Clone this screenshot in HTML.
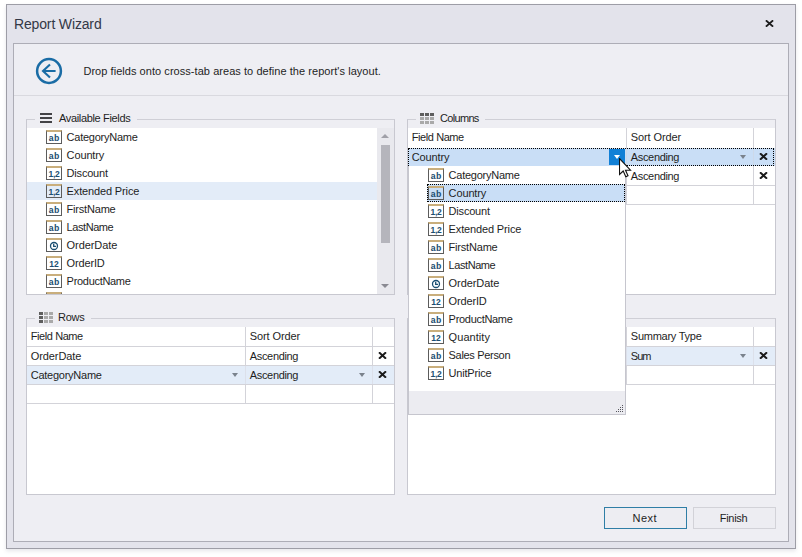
<!DOCTYPE html>
<html><head><meta charset="utf-8"><title>Report Wizard</title>
<style>
html,body{margin:0;padding:0}
body{width:802px;height:557px;position:relative;overflow:hidden;background:#fff;font-family:"Liberation Sans",sans-serif;font-size:11px;color:#1e1e1e}
div,span{position:absolute;box-sizing:border-box;white-space:nowrap}
.t{line-height:18px;height:18px}
.ic{width:16px;height:14px;border:1px solid #5c5c5c;border-top:2px solid #c9ae7c;overflow:hidden}
.it{left:0;top:2px;width:14px;height:11px;line-height:11px;text-align:center;font-family:"Liberation Mono",monospace;font-weight:bold;font-size:9px;color:#1b4f72;letter-spacing:0}
.k3,.k2n{font-family:"Liberation Sans",sans-serif;font-size:8.5px;top:1.2px}
.k3{letter-spacing:-0.3px}
.gb{border:1px solid #c8c8d0;border-top-color:#cfcfd6}
.cap{background:#eeeef3;height:16px;line-height:16px}
.hl{height:1px;background:#d3d3d9}
.vl{width:1px;background:#d3d3d9}
.ar{width:0;height:0;border-left:3.5px solid transparent;border-right:3.5px solid transparent;border-top:4px solid #7a828c}
</style></head><body>

<div style="left:6px;top:4px;width:790px;height:545px;border:1px solid #9d9da6;background:#e3e3eb;box-shadow:0 2px 4px rgba(60,60,90,.13)"></div>
<span style="left:14px;top:14px;font-size:14px;line-height:20px;letter-spacing:-0.15px;color:#333846">Report Wizard</span>
<svg style="position:absolute;left:765px;top:20px" width="9" height="7" viewBox="0 0 9 7"><path d="M0.9 0.4L8.1 6.6M8.1 0.4L0.9 6.6" stroke="#1a1a1a" stroke-width="1.9" fill="none"/></svg>
<div style="left:13px;top:43px;width:776px;height:499px;border:1px solid #abb;border-color:#adadb6;background:#eeeef3"></div>
<svg style="position:absolute;left:35px;top:57px" width="28" height="28" viewBox="0 0 28 28"><circle cx="14" cy="14" r="11.9" fill="none" stroke="#1a6ca5" stroke-width="2.5"/><path d="M20.6 14H8.5M15 7.4L8 14L15 20.6" fill="none" stroke="#1a6ca5" stroke-width="2.1"/></svg>
<span class="t" style="left:83.4px;top:62px;letter-spacing:0.05px;">Drop fields onto cross-tab areas to define the report's layout.</span>
<div class="hl" style="left:14px;top:95px;width:774px;background:#d9d9df"></div>
<div class="gb" style="left:26px;top:119px;width:369px;height:176px"></div>
<div class="cap" style="left:35px;top:111px;width:102px"></div>
<div style="left:40px;top:113px;width:12px;height:2px;background:#434347"></div><div style="left:40px;top:117px;width:12px;height:2px;background:#434347"></div><div style="left:40px;top:121px;width:12px;height:2px;background:#434347"></div>
<span class="t" style="left:59px;top:109px;letter-spacing:-0.34px;">Available Fields</span>
<div class="gb" style="left:26px;top:318px;width:369px;height:177px"></div>
<div class="cap" style="left:35px;top:310px;width:56px"></div>
<svg style="position:absolute;left:39px;top:312px" width="14" height="11" viewBox="0 0 14 11"><rect x="0" y="0" width="4" height="3" fill="#5e5e5e"/><rect x="5" y="0" width="4" height="3" fill="#a9a9a9"/><rect x="10" y="0" width="4" height="3" fill="#a9a9a9"/><rect x="0" y="4" width="4" height="3" fill="#5e5e5e"/><rect x="5" y="4" width="4" height="3" fill="#a9a9a9"/><rect x="10" y="4" width="4" height="3" fill="#a9a9a9"/><rect x="0" y="8" width="4" height="3" fill="#5e5e5e"/><rect x="5" y="8" width="4" height="3" fill="#a9a9a9"/><rect x="10" y="8" width="4" height="3" fill="#a9a9a9"/></svg>
<span class="t" style="left:58px;top:308px;letter-spacing:-0.27px;">Rows</span>
<div class="gb" style="left:407px;top:119px;width:369px;height:176px"></div>
<div class="cap" style="left:416px;top:111px;width:69px"></div>
<svg style="position:absolute;left:420px;top:113px" width="14" height="11" viewBox="0 0 14 11"><rect x="0" y="0" width="4" height="3" fill="#5e5e5e"/><rect x="5" y="0" width="4" height="3" fill="#5e5e5e"/><rect x="10" y="0" width="4" height="3" fill="#5e5e5e"/><rect x="0" y="4" width="4" height="3" fill="#a9a9a9"/><rect x="5" y="4" width="4" height="3" fill="#a9a9a9"/><rect x="10" y="4" width="4" height="3" fill="#a9a9a9"/><rect x="0" y="8" width="4" height="3" fill="#a9a9a9"/><rect x="5" y="8" width="4" height="3" fill="#a9a9a9"/><rect x="10" y="8" width="4" height="3" fill="#a9a9a9"/></svg>
<span class="t" style="left:440px;top:109px;letter-spacing:-0.68px;">Columns</span>
<div class="gb" style="left:407px;top:318px;width:369px;height:177px"></div>
<div class="cap" style="left:416px;top:310px;width:56px"></div>
<svg style="position:absolute;left:420px;top:312px" width="14" height="11" viewBox="0 0 14 11"><rect x="0" y="0" width="4" height="3" fill="#5e5e5e"/><rect x="5" y="0" width="4" height="3" fill="#a9a9a9"/><rect x="10" y="0" width="4" height="3" fill="#a9a9a9"/><rect x="0" y="4" width="4" height="3" fill="#5e5e5e"/><rect x="5" y="4" width="4" height="3" fill="#a9a9a9"/><rect x="10" y="4" width="4" height="3" fill="#a9a9a9"/><rect x="0" y="8" width="4" height="3" fill="#5e5e5e"/><rect x="5" y="8" width="4" height="3" fill="#a9a9a9"/><rect x="10" y="8" width="4" height="3" fill="#a9a9a9"/></svg>
<div style="left:27px;top:128px;width:367px;height:166px;background:#fff;overflow:hidden">
<div class="ic" style="left:19px;top:2px"><span class="it k2">ab</span></div>
<span class="t" style="left:39.6px;top:0px;letter-spacing:-0.25px;">CategoryName</span>
<div class="ic" style="left:19px;top:20px"><span class="it k2">ab</span></div>
<span class="t" style="left:39.6px;top:18px;letter-spacing:-0.13px;">Country</span>
<div class="ic" style="left:19px;top:38px"><span class="it k3">1,2</span></div>
<span class="t" style="left:39.6px;top:36px;letter-spacing:-0.2px;">Discount</span>
<div style="left:0;top:54px;width:350px;height:18px;background:#e3ecf8"></div>
<div class="ic" style="left:19px;top:56px"><span class="it k3">1,2</span></div>
<span class="t" style="left:39.6px;top:54px;letter-spacing:-0.14px;">Extended Price</span>
<div class="ic" style="left:19px;top:74px"><span class="it k2">ab</span></div>
<span class="t" style="left:39.6px;top:72px;letter-spacing:-0.2px;">FirstName</span>
<div class="ic" style="left:19px;top:92px"><span class="it k2">ab</span></div>
<span class="t" style="left:39.6px;top:90px;letter-spacing:-0.43px;">LastName</span>
<div class="ic" style="left:19px;top:110px"><svg width="14" height="11" viewBox="0 0 14 11" style="position:absolute;left:0;top:0"><circle cx="7" cy="6" r="3.5" fill="none" stroke="#1b4f72" stroke-width="1.3"/><path d="M6.7 3.7V6.4H9" fill="none" stroke="#1b4f72" stroke-width="1.3"/></svg></div>
<span class="t" style="left:39.6px;top:108px;letter-spacing:-0.08px;">OrderDate</span>
<div class="ic" style="left:19px;top:128px"><span class="it k2n">12</span></div>
<span class="t" style="left:39.6px;top:126px;letter-spacing:-0.15px;">OrderID</span>
<div class="ic" style="left:19px;top:146px"><span class="it k2">ab</span></div>
<span class="t" style="left:39.6px;top:144px;letter-spacing:-0.3px;">ProductName</span>
<div class="ic" style="left:19px;top:164px"><span class="it k2n">12</span></div>
<div style="left:350px;top:0;width:17px;height:166px;background:#e9e9ee"></div>
<div style="left:354px;top:17px;width:9px;height:98px;background:#b5b5bc"></div>
<div style="left:354px;top:6px;width:0;height:0;border-left:4.5px solid transparent;border-right:4.5px solid transparent;border-bottom:4.5px solid #a0a0a8"></div>
<div style="left:354px;top:156px;width:0;height:0;border-left:4.5px solid transparent;border-right:4.5px solid transparent;border-top:4.5px solid #8a8a92"></div>
</div>
<div style="left:27px;top:327px;width:367px;height:167px;background:#fff"></div>
<div class="hl" style="left:27px;top:346px;width:367px"></div>
<div class="hl" style="left:27px;top:365px;width:367px"></div>
<div class="hl" style="left:27px;top:384px;width:367px"></div>
<div class="hl" style="left:27px;top:403px;width:367px"></div>
<div class="vl" style="left:245px;top:327px;height:77px"></div>
<div class="vl" style="left:372px;top:327px;height:77px"></div>
<div style="left:27px;top:366px;width:367px;height:18px;background:#e3ecf8"></div>
<div class="vl" style="left:245px;top:366px;height:18px;opacity:.45"></div>
<div class="vl" style="left:372px;top:366px;height:18px;opacity:.45"></div>
<span class="t" style="left:30.7px;top:327px;letter-spacing:-0.41px;">Field Name</span>
<span class="t" style="left:249.8px;top:327px;letter-spacing:-0.1px;">Sort Order</span>
<span class="t" style="left:30.7px;top:347px;letter-spacing:-0.08px;">OrderDate</span>
<span class="t" style="left:249.8px;top:347px;letter-spacing:-0.34px;">Ascending</span>
<svg style="position:absolute;left:378px;top:352px" width="9" height="7" viewBox="0 0 9 7"><path d="M1 0.3L8 6.7M8 0.3L1 6.7" stroke="#1a1a1a" stroke-width="2" fill="none"/></svg>
<span class="t" style="left:30.7px;top:366px;letter-spacing:-0.25px;">CategoryName</span>
<span class="t" style="left:249.8px;top:366px;letter-spacing:-0.34px;">Ascending</span>
<svg style="position:absolute;left:378px;top:371px" width="9" height="7" viewBox="0 0 9 7"><path d="M1 0.3L8 6.7M8 0.3L1 6.7" stroke="#1a1a1a" stroke-width="2" fill="none"/></svg>
<div class="ar" style="left:232px;top:373px"></div>
<div class="ar" style="left:359px;top:373px"></div>
<div style="left:408px;top:128px;width:367px;height:166px;background:#fff"></div>
<div class="hl" style="left:408px;top:185px;width:367px"></div>
<div class="hl" style="left:408px;top:204px;width:367px"></div>
<div class="vl" style="left:626px;top:128px;height:77px"></div>
<div class="vl" style="left:753px;top:128px;height:77px"></div>
<div style="left:408px;top:148px;width:367px;height:18px;background:#c9def6"></div>
<div class="vl" style="left:626px;top:148px;height:18px;opacity:.45"></div>
<div class="vl" style="left:753px;top:148px;height:18px;opacity:.45"></div>
<span class="t" style="left:411.7px;top:128px;letter-spacing:-0.41px;">Field Name</span>
<span class="t" style="left:630.8px;top:128px;letter-spacing:-0.1px;">Sort Order</span>
<span class="t" style="left:411.7px;top:148px;letter-spacing:-0.13px;">Country</span>
<span class="t" style="left:630.8px;top:148px;letter-spacing:-0.34px;">Ascending</span>
<svg style="position:absolute;left:759px;top:153px" width="9" height="7" viewBox="0 0 9 7"><path d="M1 0.3L8 6.7M8 0.3L1 6.7" stroke="#1a1a1a" stroke-width="2" fill="none"/></svg>
<div class="ar" style="left:613px;top:155px"></div>
<div class="ar" style="left:740px;top:155px"></div>
<span class="t" style="left:630.8px;top:167px;letter-spacing:-0.34px;">Ascending</span>
<svg style="position:absolute;left:759px;top:172px" width="9" height="7" viewBox="0 0 9 7"><path d="M1 0.3L8 6.7M8 0.3L1 6.7" stroke="#1a1a1a" stroke-width="2" fill="none"/></svg>
<div style="left:408px;top:327px;width:367px;height:167px;background:#fff"></div>
<div class="hl" style="left:408px;top:346px;width:367px"></div>
<div class="hl" style="left:408px;top:365px;width:367px"></div>
<div class="hl" style="left:408px;top:384px;width:367px"></div>
<div class="vl" style="left:626px;top:327px;height:58px"></div>
<div class="vl" style="left:753px;top:327px;height:58px"></div>
<div style="left:408px;top:347px;width:367px;height:18px;background:#e3ecf8"></div>
<div class="vl" style="left:626px;top:347px;height:18px;opacity:.45"></div>
<div class="vl" style="left:753px;top:347px;height:18px;opacity:.45"></div>
<span class="t" style="left:411.7px;top:327px;letter-spacing:-0.41px;">Field Name</span>
<span class="t" style="left:630.8px;top:327px;letter-spacing:-0.25px;">Summary Type</span>
<span class="t" style="left:630.8px;top:347px;letter-spacing:-0.95px;">Sum</span>
<svg style="position:absolute;left:759px;top:352px" width="9" height="7" viewBox="0 0 9 7"><path d="M1 0.3L8 6.7M8 0.3L1 6.7" stroke="#1a1a1a" stroke-width="2" fill="none"/></svg>
<div class="ar" style="left:740px;top:354px"></div>
<div style="left:408px;top:148px;width:366px;height:18px;border:1px dotted #000;border-bottom:none"></div>
<div style="left:626px;top:165px;width:148px;height:1px;border-top:1px dotted #000"></div>
<div style="left:609px;top:149px;width:16px;height:16px;background:#1180d6"></div>
<div class="ar" style="left:614px;top:155px;border-top-color:#fff"></div>
<div style="left:408px;top:166px;width:218px;height:249px;background:#fff;border:1px solid #c6c6ce;border-top:none;overflow:hidden">
<div style="left:0;top:225px;width:216px;height:23px;background:#ececf1"></div>
<div class="ic" style="left:19px;top:2px"><span class="it k2">ab</span></div>
<span class="t" style="left:39.6px;top:0px;letter-spacing:-0.25px;">CategoryName</span>
<div style="left:18px;top:18px;width:198px;height:18px;background:#c9def6;border:1px dotted #000"></div>
<div class="ic" style="left:19px;top:20px"><span class="it k2">ab</span></div>
<span class="t" style="left:39.6px;top:18px;letter-spacing:-0.13px;">Country</span>
<div class="ic" style="left:19px;top:38px"><span class="it k3">1,2</span></div>
<span class="t" style="left:39.6px;top:36px;letter-spacing:-0.2px;">Discount</span>
<div class="ic" style="left:19px;top:56px"><span class="it k3">1,2</span></div>
<span class="t" style="left:39.6px;top:54px;letter-spacing:-0.14px;">Extended Price</span>
<div class="ic" style="left:19px;top:74px"><span class="it k2">ab</span></div>
<span class="t" style="left:39.6px;top:72px;letter-spacing:-0.2px;">FirstName</span>
<div class="ic" style="left:19px;top:92px"><span class="it k2">ab</span></div>
<span class="t" style="left:39.6px;top:90px;letter-spacing:-0.43px;">LastName</span>
<div class="ic" style="left:19px;top:110px"><svg width="14" height="11" viewBox="0 0 14 11" style="position:absolute;left:0;top:0"><circle cx="7" cy="6" r="3.5" fill="none" stroke="#1b4f72" stroke-width="1.3"/><path d="M6.7 3.7V6.4H9" fill="none" stroke="#1b4f72" stroke-width="1.3"/></svg></div>
<span class="t" style="left:39.6px;top:108px;letter-spacing:-0.08px;">OrderDate</span>
<div class="ic" style="left:19px;top:128px"><span class="it k2n">12</span></div>
<span class="t" style="left:39.6px;top:126px;letter-spacing:-0.15px;">OrderID</span>
<div class="ic" style="left:19px;top:146px"><span class="it k2">ab</span></div>
<span class="t" style="left:39.6px;top:144px;letter-spacing:-0.3px;">ProductName</span>
<div class="ic" style="left:19px;top:164px"><span class="it k2n">12</span></div>
<span class="t" style="left:39.6px;top:162px;letter-spacing:0.06px;">Quantity</span>
<div class="ic" style="left:19px;top:182px"><span class="it k2">ab</span></div>
<span class="t" style="left:39.6px;top:180px;letter-spacing:-0.32px;">Sales Person</span>
<div class="ic" style="left:19px;top:200px"><span class="it k3">1,2</span></div>
<span class="t" style="left:39.6px;top:198px;letter-spacing:-0.2px;">UnitPrice</span>
<svg style="position:absolute;left:207px;top:239px" width="7" height="7" viewBox="0 0 7 7"><rect x="6" y="0" width="1" height="1" fill="#55555c"/><rect x="4" y="2" width="1" height="1" fill="#55555c"/><rect x="6" y="2" width="1" height="1" fill="#55555c"/><rect x="2" y="4" width="1" height="1" fill="#55555c"/><rect x="4" y="4" width="1" height="1" fill="#55555c"/><rect x="6" y="4" width="1" height="1" fill="#55555c"/><rect x="0" y="6" width="1" height="1" fill="#55555c"/><rect x="2" y="6" width="1" height="1" fill="#55555c"/><rect x="4" y="6" width="1" height="1" fill="#55555c"/><rect x="6" y="6" width="1" height="1" fill="#55555c"/></svg>
</div>
<svg style="position:absolute;left:619px;top:158px" width="13" height="20" viewBox="0 0 13 20"><path d="M0.5 0.5V16.5L4.2 13L6.8 18.8L9 17.8L6.5 12.2H11.5Z" fill="#fff" stroke="#111" stroke-width="1.1"/></svg>
<div style="left:604px;top:507px;width:83px;height:22px;border:1px solid #2f7ea6;background:#ededf2"></div>
<span class="t" style="left:632.6px;top:508.5px;letter-spacing:0.47px;">Next</span>
<div style="left:693px;top:507px;width:83px;height:22px;border:1px solid #d2d2d8;background:#ededf2"></div>
<span class="t" style="left:719.7px;top:508.5px;letter-spacing:-0.26px;">Finish</span>
</body></html>
